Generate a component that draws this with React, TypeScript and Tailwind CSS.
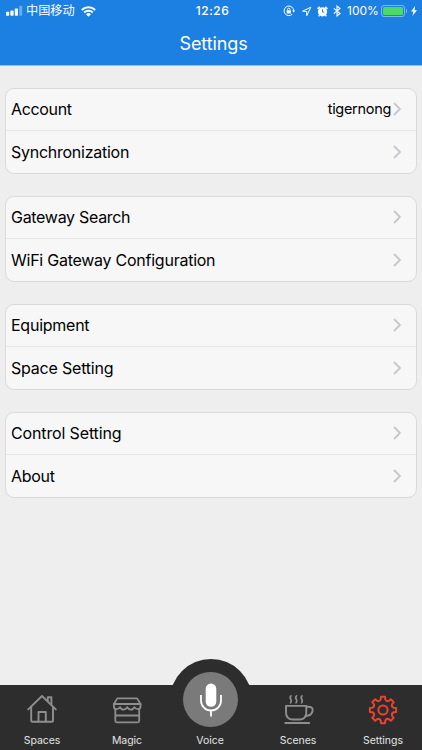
import type { ReactNode } from 'react';

type Row = { label: string; tracking: string; value?: string };

const groups: Row[][] = [
  [
    { label: 'Account', tracking: 'tracking-[-0.35px]', value: 'tigernong' },
    { label: 'Synchronization', tracking: 'tracking-[-0.26px]' },
  ],
  [
    { label: 'Gateway Search', tracking: 'tracking-[-0.3px]' },
    { label: 'WiFi Gateway Configuration', tracking: 'tracking-[-0.25px]' },
  ],
  [
    { label: 'Equipment', tracking: 'tracking-[-0.25px]' },
    { label: 'Space Setting', tracking: 'tracking-[-0.2px]' },
  ],
  [
    { label: 'Control Setting', tracking: 'tracking-[-0.14px]' },
    { label: 'About', tracking: 'tracking-[-0.3px]' },
  ],
];

function StatusBar() {
  return (
    <div className="flex h-[22px] items-center pl-1.5 pr-[5px]">
      <svg className="h-3 w-[17px] shrink-0" viewBox="0 0 17 12" fill="currentColor">
        <rect x="0" y="6.8" width="3.2" height="4" rx="0.8" />
        <rect x="4.4" y="5.4" width="3.2" height="5.4" rx="0.8" />
        <rect x="8.8" y="3.4" width="3.2" height="7.4" rx="0.8" />
        <rect x="13.2" y="0.8" width="3" height="10" rx="0.8" opacity="0.35" />
      </svg>
      <span className="ml-[3px] font-['Inter','Noto_Sans_CJK_SC',sans-serif] text-[12.2px] leading-[22px]">中国移动</span>
      <svg className="ml-[6px] mr-px h-[11px] w-[15px] shrink-0" viewBox="0 0 15 11" fill="none" stroke="currentColor" strokeWidth="1.9">
        <path d="M0.8 4a9.5 9.5 0 0 1 13.4 0" />
        <path d="M3.2 6.5a6.1 6.1 0 0 1 8.6 0" />
        <path d="M5 8.2a3.5 3.5 0 0 1 5 0L7.5 10.7z" fill="currentColor" stroke="none" />
      </svg>
      <span className="ml-[99px] w-[35px] text-[12px] font-medium leading-[22px] tracking-[0.5px]">12:26</span>
      <div className="ml-auto flex items-center">
        <svg className="h-3 w-3" viewBox="0 0 12 12" fill="none" stroke="currentColor">
          <path d="M9.3 9.2a4.8 4.8 0 1 1 1.4-3.4" strokeWidth="1" />
          <path d="M9.2 5.6h3l-1.5 2z" fill="currentColor" stroke="none" />
          <rect x="3.7" y="5.3" width="4.2" height="3.3" rx="0.3" fill="currentColor" stroke="none" />
          <path d="M4.5 5.4V4.5a1.3 1.3 0 0 1 2.6 0v0.9" strokeWidth="0.9" />
        </svg>
        <svg className="ml-1.5 h-[11px] w-[11px]" viewBox="0 0 11 11" fill="none" stroke="currentColor" strokeLinejoin="round">
          <path d="M9.8 1.2 1.6 5.2l4 .2.2 4.3z" strokeWidth="1" />
        </svg>
        <svg className="ml-[5px] mr-px h-[11px] w-[11px]" viewBox="0 0 11 11" fill="none">
          <circle cx="5.5" cy="5.8" r="4.6" fill="currentColor" />
          <path d="M0.6 2.9 2.8 0.9M10.4 2.9 8.2 0.9M2.5 9.2l-.9 1M8.5 9.2l.9 1" stroke="currentColor" strokeWidth="1.5" />
          <path d="M5.5 3.2v2.9h2" stroke="#1c80e2" strokeWidth="0.9" />
        </svg>
        <svg className="ml-[4px] mr-px h-3 w-2" viewBox="0 0 8 12" fill="none" stroke="currentColor" strokeWidth="1.1">
          <path d="M0.8 3.4 7 8.5 4 11V1l3 2.5L0.8 8.6" />
        </svg>
        <span className="ml-[5px] w-[31px] text-[12px] leading-[22px] tracking-[0px]">100%</span>
        <div className="ml-[3px] h-3 w-6 rounded-[3px] border border-[#80b9ef] p-px">
          <div className="h-full w-full rounded-[1.5px] bg-[#4cd964]" />
        </div>
        <div className="ml-px h-1 w-px rounded-r bg-[#80b9ef]" />
        <svg className="ml-[4px] h-[10px] w-[6px]" viewBox="0 0 6 10" fill="currentColor">
          <path d="M4.2 0 0 5.5h2.4L1.4 10 6 4.2H3.5z" />
        </svg>
      </div>
    </div>
  );
}

function SettingsRow({ label, tracking, value }: Row) {
  return (
    <button className="flex h-[42px] w-full items-center pl-[5px] pr-[15px] text-left first:pb-px">
      <span className={`text-[16px] leading-5 ${tracking}`}>{label}</span>
      {value && <span className="ml-auto text-[14.5px] leading-5 tracking-[-0.3px]">{value}</span>}
      <svg
        className={`${value ? 'ml-[2px]' : 'ml-auto'} h-[14px] w-2 shrink-0 text-[#c7c7cc]`}
        viewBox="0 0 8 14"
        fill="none"
        stroke="currentColor"
        strokeWidth="1.9"
      >
        <path d="m1 1 6 6-6 6" />
      </svg>
    </button>
  );
}

function Tab({ label, width, children }: { label: string; width: string; children?: ReactNode }) {
  return (
    <button className={`${width} relative flex shrink-0 flex-col items-center pt-2`}>
      <div className="flex h-8 items-center justify-center">{children}</div>
      <span className="mt-2 text-[10.5px] leading-4 tracking-[-0.05px] text-[#e4e4e4]">{label}</span>
    </button>
  );
}

function HouseIcon() {
  return (
    <svg className="h-8 w-8 text-[#8e8e8e]" viewBox="0 0 32 32" fill="none" stroke="currentColor" strokeWidth="1.9" strokeLinecap="round" strokeLinejoin="round">
      <path d="M2.2 16.4 16 3l13.8 13.4" />
      <path d="M5.2 14v13.7q0 1.1 1.1 1.1h19.6q1.1 0 1.1-1.1V14" />
      <path d="M12.5 28.5V19h7.3v9.5M21.8 8V4.3h3.6v7.3" />
    </svg>
  );
}

function ShopIcon() {
  return (
    <svg className="h-8 w-8 text-[#8e8e8e]" viewBox="0 0 32 32" fill="none" stroke="currentColor" strokeWidth="1.8" strokeLinecap="round" strokeLinejoin="round">
      <path d="M6.3 5.4h19.8l3.4 5.6H2.9z" />
      <path d="M2.9 11v2.6q0 2.5 2.5 2.5 2.4 0 3.6-2 1.2 2.6 3.5 2.6t3.7-2.6q1.4 2.6 3.7 2.6t3.5-2.6q1.2 2 3.6 2 2.5 0 2.5-2.5V11" />
      <path d="M4.3 16v11.8q0 1.5 1.5 1.5h20.9q1.5 0 1.5-1.5V16M4.5 22.5H28" />
    </svg>
  );
}

function CupIcon() {
  return (
    <svg className="h-8 w-8 text-[#8e8e8e]" viewBox="0 0 32 32" fill="none" stroke="currentColor" strokeWidth="1.9" strokeLinecap="round" strokeLinejoin="round">
      <path d="M4 12.9h20.3v6.6q0 7-7 7H11q-7 0-7-7z" />
      <path d="M24.3 13.8h2q4.8 0 4.3 3.7-.7 5.3-7 5.5M3.3 30h23.9" />
      <path d="M9 2.8c-3 2.8 2.4 3.6-.4 7M14.5 2.8c-3 2.8 2.4 3.6-.4 7M20 2.8c-3 2.8 2.4 3.6-.4 7" strokeWidth="1.7" />
    </svg>
  );
}

const polar = (deg: number, r: number) => {
  const a = (deg * Math.PI) / 180;
  return `${(16 + r * Math.sin(a)).toFixed(2)} ${(17 - r * Math.cos(a)).toFixed(2)}`;
};

// eight teeth with rounded valleys between them
const gearPath =
  Array.from({ length: 8 }, (_, i) => {
    const a = i * 45;
    return `${i === 0 ? 'M' : 'L'}${polar(a - 9, 13.3)}L${polar(a + 9, 13.3)}L${polar(a + 12, 10.9)}Q${polar(a + 22.5, 8.8)} ${polar(a + 33, 10.9)}`;
  }).join('') + 'Z';

function GearIcon() {
  return (
    <svg className="h-8 w-8 text-[#e8432f]" viewBox="0 0 32 32" fill="none" stroke="currentColor" strokeWidth="2" strokeLinejoin="round">
      <path d={gearPath} />
      <circle cx="16" cy="17" r="4.6" />
    </svg>
  );
}

function VoiceButton() {
  return (
    <div className="absolute left-[170px] top-[-26px] h-[82px] w-[82px]">
      <div className="h-full w-full rounded-full bg-[#2d2d2d] p-[13px]">
        <div className="flex h-[55px] w-[55px] items-center justify-center rounded-full bg-[#7a7a7a] text-white">
          <svg className="h-[34px] w-[22px]" viewBox="0 0 22 34" fill="none" stroke="currentColor" strokeWidth="1.8">
            <rect x="5.7" y="0.5" width="10.6" height="23.3" rx="5.3" fill="currentColor" stroke="none" />
            <path d="M1 12v5.5a10 10 0 0 0 20 0V12M11 27.5v6" />
          </svg>
        </div>
      </div>
    </div>
  );
}

export default function App() {
  return (
    <div className="flex h-[750px] w-[422px] flex-col overflow-hidden bg-[#eeeeee] font-['Inter',sans-serif] text-black">
      <header className="h-[66px] shrink-0 border-b border-[#8fbff0] bg-[#1c80e2] text-white">
        <StatusBar />
        <h1 className="mt-2 pl-[5px] text-center text-[18px] leading-7 tracking-[-0.1px]">Settings</h1>
      </header>

      <main className="flex grow flex-col gap-[22px] px-[5px] pt-[22px]">
        {groups.map((rows) => (
          <section
            key={rows[0].label}
            className="h-[86px] divide-y divide-[#e6e6e6] rounded-[9px] border border-[#dadada] bg-[#f7f7f7]"
          >
            {rows.map((row) => (
              <SettingsRow key={row.label} {...row} />
            ))}
          </section>
        ))}
      </main>

      <nav className="relative flex h-[65px] shrink-0 bg-[#2d2d2d]">
        <VoiceButton />
        <Tab label="Spaces" width="w-[84px]"><HouseIcon /></Tab>
        <Tab label="Magic" width="w-[86px]"><ShopIcon /></Tab>
        <Tab label="Voice" width="w-[80px]" />
        <Tab label="Scenes" width="w-[96px]"><CupIcon /></Tab>
        <Tab label="Settings" width="w-[74px]"><GearIcon /></Tab>
      </nav>
    </div>
  );
}
